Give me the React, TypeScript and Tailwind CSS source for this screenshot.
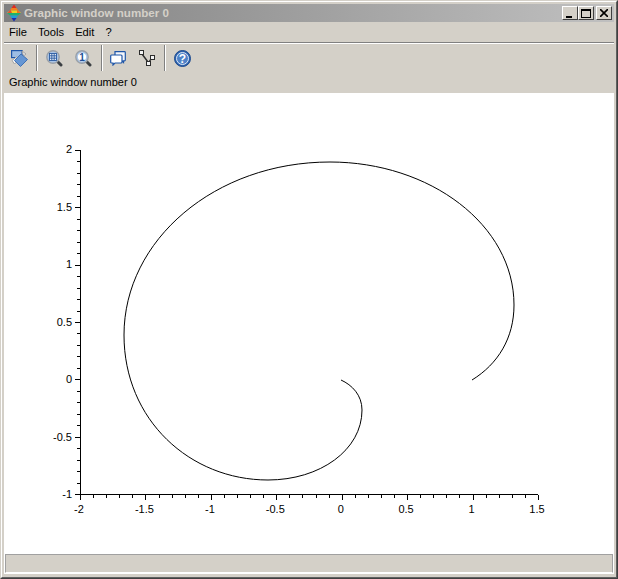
const font = "font-['Liberation_Sans',Arial,sans-serif]";

const menus = ["File", "Tools", "Edit", "?"];

const xLabels = [
  { v: "-2", x: 79 },
  { v: "-1.5", x: 144.4 },
  { v: "-1", x: 209.9 },
  { v: "-0.5", x: 275.3 },
  { v: "0", x: 340.7 },
  { v: "0.5", x: 406.1 },
  { v: "1", x: 471.6 },
  { v: "1.5", x: 537 },
];

const yLabels = [
  { v: "2", y: 149.5 },
  { v: "1.5", y: 207.8 },
  { v: "1", y: 265.2 },
  { v: "0.5", y: 322.5 },
  { v: "0", y: 379.8 },
  { v: "-0.5", y: 437.6 },
  { v: "-1", y: 494.5 },
];

function Plot() {
  const xTicks = Array.from({ length: 36 }, (_, i) => i);
  const yTicks = Array.from({ length: 31 }, (_, i) => i);
  return (
    <svg width="610" height="458" viewBox="4 93 610 458" className="block">
      <g stroke="#000" strokeWidth="1" shapeRendering="crispEdges">
        <line x1="80.5" y1="150" x2="80.5" y2="495" />
        <line x1="80" y1="494.5" x2="538" y2="494.5" />
        {yTicks.map((i) => {
          const y = Math.round(150 + (i * 344) / 30) + 0.5;
          return <line key={i} x1={i % 5 === 0 ? 75 : 77} y1={y} x2="80" y2={y} />;
        })}
        {xTicks.map((i) => {
          const x = Math.round(80 + (i * 458) / 35) + 0.5;
          return <line key={i} x1={x} y1="495" x2={x} y2={i % 5 === 0 ? 500 : 498} />;
        })}
      </g>
      <path
        d="M472 380 C498 364 514 338 514 305 C514 225 430 162 330 162 C215 162 124 240 124 335 C124 420 190 480 268 480 C320 480 362 450 362 410 C362 395 352 385 341 380"
        fill="none"
        stroke="#000"
        strokeWidth="1"
      />
      <g fontSize="11" fill="#000" fontFamily="Liberation Sans, Arial, sans-serif">
        {yLabels.map((l) => (
          <text key={l.v} x="72" y={l.y + 3} textAnchor="end">
            {l.v}
          </text>
        ))}
        {xLabels.map((l) => (
          <text key={l.v} x={l.x} y="513" textAnchor="middle">
            {l.v}
          </text>
        ))}
      </g>
    </svg>
  );
}

function Separator({ className }: { className: string }) {
  return <div className={`h-[26px] w-[2px] border-l border-r border-l-[#808080] border-r-white ${className}`} />;
}

function ZoomIcon({ one, className }: { one?: boolean; className: string }) {
  return (
    <svg width="17" height="17" viewBox="0 0 17 17" className={className}>
      <line x1="11" y1="11" x2="15" y2="15" stroke="#3c4044" strokeWidth="3" strokeLinecap="round" />
      <circle cx="7" cy="7" r="6.2" fill="#a9c4e6" stroke="#9aa0a8" strokeWidth="1.4" />
      {one ? (
        <>
          <circle cx="7" cy="7" r="4.2" fill="#fff" />
          <text x="7" y="10.6" textAnchor="middle" fontSize="10" fontWeight="700" fill="#1d4f96" fontFamily="Liberation Sans, sans-serif">
            1
          </text>
        </>
      ) : (
        <g stroke="#2a5aa0" strokeWidth="0.9" fill="#e4ecf7">
          <rect x="3.5" y="3.5" width="7" height="7" />
          <path d="M5.8 3.5V10.5M8.2 3.5V10.5M3.5 5.8H10.5M3.5 8.2H10.5" fill="none" />
        </g>
      )}
    </svg>
  );
}

function RotateIcon({ className }: { className: string }) {
  return (
    <svg width="17" height="17" viewBox="0 0 17 17" className={className}>
      <rect x="0.6" y="0.6" width="10.5" height="7" fill="#9dbde4" stroke="#1f56a8" strokeWidth="1.2" />
      <path d="M1 10.5 6 6.5 8.5 9 3.5 14Z" fill="#f4f4f4" stroke="#a4a4a4" />
      <path d="M11 1 15 4 12.5 6Z" fill="#ececec" stroke="#a4a4a4" />
      <path d="M3.5 10.5 10 4 16.5 9.5 9.5 16.5Z" fill="#6596d4" stroke="#3f70b4" />
    </svg>
  );
}

function WindowsIcon({ className }: { className: string }) {
  return (
    <svg width="16" height="15" viewBox="0 0 16 15" className={className}>
      <path d="M5 0.7H14.5Q15.3 0.7 15.3 1.5V9Q15.3 9.8 14.5 9.8H13.5V11.5L12 9.8H5Z" fill="#f3f6fb" stroke="#1f56a8" strokeWidth="1.2" />
      <path d="M1.5 4H11Q12 4 12 5V11Q12 12 11 12H5L3 14V12H1.5Q0.7 12 0.7 11V5Q0.7 4 1.5 4Z" fill="#fff" stroke="#1f56a8" strokeWidth="1.2" />
    </svg>
  );
}

function GraphIcon({ className }: { className: string }) {
  return (
    <svg width="16" height="16" viewBox="0 0 16 16" className={className}>
      <path d="M3 4 9 12M10.5 11 13 8" stroke="#2c2c2c" strokeWidth="1.4" fill="none" />
      <rect x="0.5" y="0.5" width="4" height="4" fill="#f4f4f4" stroke="#2c2c2c" shapeRendering="crispEdges" />
      <rect x="7.5" y="11.5" width="4" height="4" fill="#f4f4f4" stroke="#2c2c2c" shapeRendering="crispEdges" />
      <rect x="11.5" y="5.5" width="4" height="4" fill="#f4f4f4" stroke="#2c2c2c" shapeRendering="crispEdges" />
    </svg>
  );
}

function HelpIcon({ className }: { className: string }) {
  return (
    <svg width="17" height="17" viewBox="0 0 17 17" className={className}>
      <circle cx="8.5" cy="8.5" r="8" fill="#2d62ae" stroke="#1d4a8e" />
      <circle cx="8.5" cy="8.5" r="6" fill="#4f82c8" stroke="#dfe8f5" strokeWidth="1" />
      <text x="8.5" y="13" textAnchor="middle" fontSize="12" fontWeight="700" fill="#fff" fontFamily="Liberation Sans, sans-serif">
        ?
      </text>
    </svg>
  );
}

function LogoIcon() {
  return (
    <svg width="14" height="18" viewBox="0 0 14 18">
      <path d="M7 0.5 9.5 4H4.5Z" fill="#e02a20" />
      <path d="M4.5 4H9.5L11 6.5H3Z" fill="#f08020" />
      <path d="M3 6.5H11L14 9H0Z" fill="#f0d020" />
      <path d="M0 9H14L11 11.5H3Z" fill="#20b070" />
      <path d="M3 11.5H11L9.5 14H4.5Z" fill="#20a0d8" />
      <path d="M4.5 14H9.5L7 17.5Z" fill="#1c30b0" />
      <path d="M0.5 9 3.5 5.5 5 9Z" fill="#e85030" />
      <path d="M10 5 13.5 9H10Z" fill="#f07020" />
    </svg>
  );
}

function CaptionButton({ kind }: { kind: "min" | "max" | "close" }) {
  return (
    <div className="flex h-[14px] w-[16px] items-center justify-center border border-t-white border-l-white border-r-[#404040] border-b-[#404040] bg-[#d4d0c8]">
      {kind === "min" && <div className="mt-[7px] mr-[3px] h-[2px] w-[6px] bg-black" />}
      {kind === "max" && <div className="h-[9px] w-[10px] border border-t-2 border-black" />}
      {kind === "close" && (
        <svg width="8" height="8" viewBox="0 0 8 8">
          <path d="M0 0 8 8M8 0 0 8" stroke="#000" strokeWidth="1.6" />
        </svg>
      )}
    </div>
  );
}

export default function App() {
  return (
    <div className={`${font} h-[579px] w-[618px] overflow-hidden border-t border-l border-r border-b border-t-[#d4d0c8] border-l-[#d4d0c8] border-r-[#404040] border-b-[#404040] bg-[#d4d0c8]`}>
      <div className="h-full w-full border-t border-l border-r border-b border-t-white border-l-white border-r-[#606060] border-b-[#606060]">
        <div className="flex h-full flex-col pt-[2px] pr-[2px] pb-[3px] pl-[2px]">
          <div className="flex h-[18px] shrink-0 items-center justify-between bg-gradient-to-r from-[#808080] to-[#c0c0c0] pl-[3px] pr-[2px]">
            <div className="flex items-center gap-[3px]">
              <LogoIcon />
              <span className="text-[11.6px] leading-none font-bold text-[#d4d0c8]">Graphic window number 0</span>
            </div>
            <div className="flex items-center">
              <CaptionButton kind="min" />
              <CaptionButton kind="max" />
              <div className="w-[2px]" />
              <CaptionButton kind="close" />
            </div>
          </div>
          <div className="flex h-[20px] shrink-0 items-center gap-[11px] pl-[5px] text-[11.2px] text-black">
            {menus.map((m) => (
              <span key={m}>{m}</span>
            ))}
          </div>
          <div className="h-[2px] shrink-0 border-t border-b border-t-[#808080] border-b-white" />
          <div className="flex h-[28px] shrink-0 items-center pl-[7px]">
            <RotateIcon className="" />
            <Separator className="ml-[8px]" />
            <ZoomIcon className="ml-[8px]" />
            <ZoomIcon one className="ml-[12px]" />
            <Separator className="ml-[9px]" />
            <WindowsIcon className="ml-[7px]" />
            <GraphIcon className="ml-[13px]" />
            <Separator className="ml-[9px]" />
            <HelpIcon className="ml-[8px]" />
          </div>
          <div className="flex h-[21px] shrink-0 items-center pl-[5px] text-[11px] text-black">Graphic window number 0</div>
          <div className="h-[458px] w-full shrink-0 bg-white">
            <Plot />
          </div>
          <div className="h-[23px] shrink-0 bg-white pt-[3px]">
            <div className="mx-[1px] h-[19px] border border-t-[#a0a0a0] border-l-[#a0a0a0] border-r-[#a0a0a0] border-b-white bg-[#d4d0c8]" />
          </div>
        </div>
      </div>
    </div>
  );
}
